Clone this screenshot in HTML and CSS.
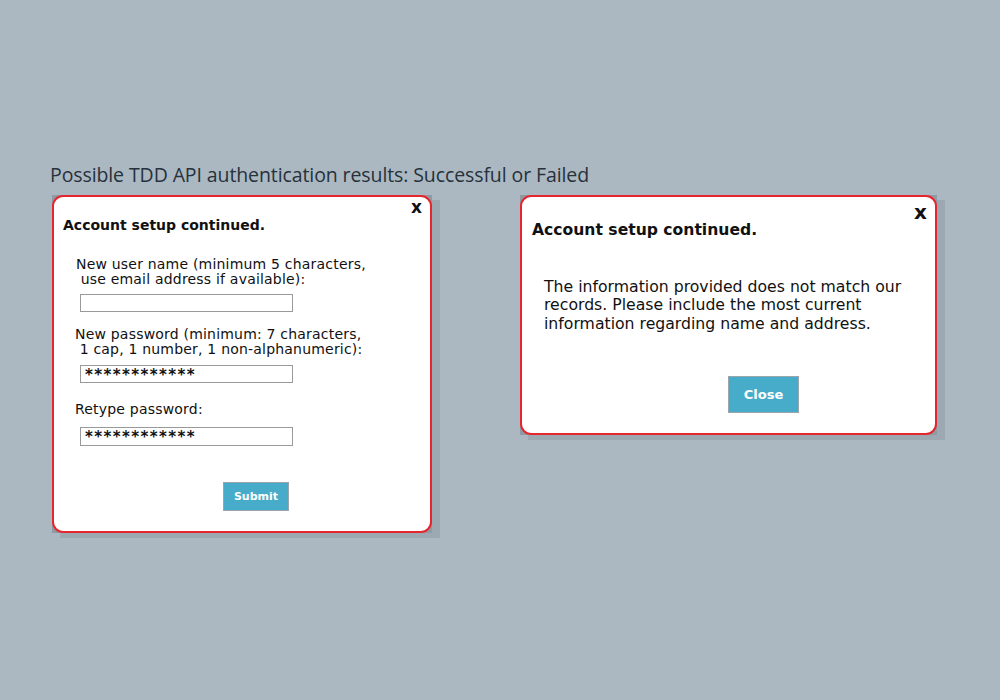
FILE: index.html
```html
<!DOCTYPE html>
<html>
<head>
<meta charset="utf-8">
<link rel="stylesheet" href="styles.css">
</head>
<body>
<div class="page">
  <h1 class="caption">Possible TDD API authentication results: Successful or Failed</h1>
  <div class="row">
    <div class="frame frame-left">
      <div class="dialog dialog-form">
        <div class="close-x">x</div>
        <div class="dlg-title">Account setup continued.</div>
        <div class="field field-user">
          <div class="label">New user name (minimum 5 characters,<br>&nbsp;use email address if available):</div>
          <div class="input"></div>
        </div>
        <div class="field field-pass">
          <div class="label">New password (minimum: 7 characters,<br>&nbsp;1 cap, 1 number, 1 non-alphanumeric):</div>
          <div class="input">************</div>
        </div>
        <div class="field field-retype">
          <div class="label">Retype password:</div>
          <div class="input">************</div>
        </div>
        <div class="actions actions-left">
          <div class="btn btn-submit">Submit</div>
        </div>
      </div>
    </div>
    <div class="frame frame-right">
      <div class="dialog dialog-msg">
        <div class="close-x close-x-lg">x</div>
        <div class="dlg-title dlg-title-lg">Account setup continued.</div>
        <p class="message">The information provided does not match our records. Please include the most current information regarding name and address.</p>
        <div class="actions actions-right">
          <div class="btn btn-close">Close</div>
        </div>
      </div>
    </div>
  </div>
</div>
</body>
</html>
```

FILE: styles.css
```css
html, body {
  margin: 0;
  padding: 0;
  background: #abb8c1;
}
.page {
  width: 1000px;
  height: 700px;
  box-sizing: border-box;
  padding: 162px 0 0 50px;
}
.caption {
  margin: 0;
  font-family: "Open Sans", "Noto Sans", sans-serif;
  font-weight: 400;
  font-size: 19.5px;
  line-height: 26px;
  color: #26313b;
  letter-spacing: -0.1px;
}
.row {
  display: flex;
  align-items: flex-start;
  gap: 88px;
  margin-top: 7px;
  padding-left: 2px;
}
.frame {
  background: #8e9ba4;
  box-shadow: 8px 5px 0 rgba(90, 105, 115, 0.18);
}
.frame-left { width: 380px; height: 338px; }
.frame-right { width: 417px; height: 240px; }
.dialog {
  position: relative;
  box-sizing: border-box;
  width: 100%;
  height: 100%;
  background: #fff;
  border: 2px solid #e5262e;
  border-radius: 11px;
  font-family: "DejaVu Sans", Verdana, sans-serif;
  color: #111;
}
.close-x {
  position: absolute;
  right: 8px;
  top: 1px;
  font-family: "DejaVu Sans", sans-serif;
  font-weight: 700;
  font-size: 17px;
  line-height: 18px;
}
.close-x-lg {
  right: 8px;
  top: 4px;
  font-size: 20px;
  line-height: 22px;
}
.dlg-title {
  font-weight: 700;
  font-size: 14px;
  line-height: 16px;
  padding: 20px 0 0 9px;
}
.dlg-title-lg {
  font-size: 15.6px;
  line-height: 20px;
  padding: 23px 0 0 10px;
}
.field {
  padding-left: 22px;
}
.field-user { margin-top: 24px; }
.field-pass { margin-top: 14.5px; }
.field-retype { margin-top: 18.5px; }
.label {
  font-size: 14px;
  line-height: 15px;
  letter-spacing: 0.2px;
  color: #111;
}
.field-pass .label, .field-retype .label { margin-left: -1px; }
.input {
  margin-top: 7px;
  margin-left: 4px;
  width: 213px;
  height: 18px;
  box-sizing: border-box;
  border: 1.5px solid #9a9a9a;
  font-size: 15px;
  line-height: 18px;
  padding-left: 4px;
  letter-spacing: 1.4px;
  color: #111;
  font-weight: 700;
  overflow: hidden;
}
.field-pass .input { margin-top: 8.5px; }
.field-retype .input { margin-top: 10.5px; height: 19px; line-height: 19px; }
.actions {
  display: flex;
}
.actions-left {
  padding: 36px 0 0 169px;
}
.btn {
  background: #47acc9;
  color: #fff;
  font-weight: 700;
  border: 1px solid #9aa6ab;
  box-sizing: border-box;
  display: flex;
  align-items: center;
  justify-content: center;
}
.btn-submit {
  width: 66px;
  height: 29px;
  font-size: 11px;
}
.message {
  margin: 37.5px 0 0 22px;
  width: 385px;
  font-size: 15.7px;
  line-height: 18.5px;
  color: #111;
}
.actions-right {
  padding: 43px 0 0 206px;
}
.btn-close {
  width: 71px;
  height: 37px;
  font-size: 13px;
}
```
